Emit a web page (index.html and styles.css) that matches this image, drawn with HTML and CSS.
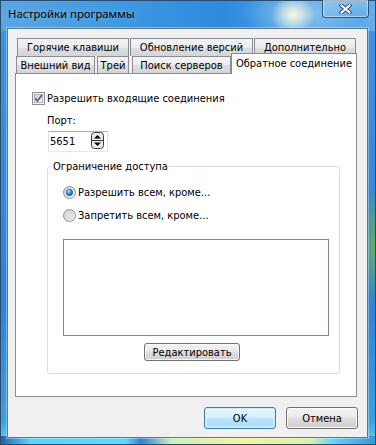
FILE: index.html
```html
<!DOCTYPE html>
<html lang="ru">
<head>
<meta charset="utf-8">
<title>Настройки программы</title>
<link rel="stylesheet" href="styles.css">
</head>
<body>
<div class="window">
  <div class="titlebar">
    <span class="title">Настройки программы</span>
    <button class="close" aria-label="Закрыть">
      <svg width="13" height="10" viewBox="0 0 13 10"><path d="M2.5 1.5 L10.5 8.5 M10.5 1.5 L2.5 8.5" stroke="#35506c" stroke-width="4" stroke-linecap="square"/><path d="M2.5 1.5 L10.5 8.5 M10.5 1.5 L2.5 8.5" stroke="#ffffff" stroke-width="2" stroke-linecap="square"/></svg>
    </button>
  </div>
  <div class="client">
    <div class="tabs">
      <div class="tab-row row-back">
        <div class="tab t-hotkeys">Горячие клавиши</div>
        <div class="tab t-updates">Обновление версий</div>
        <div class="tab t-extra">Дополнительно</div>
      </div>
      <div class="tab-row row-front">
        <div class="tab t-look">Внешний вид</div>
        <div class="tab t-tray">Трей</div>
        <div class="tab t-search">Поиск серверов</div>
        <div class="tab t-reverse active">Обратное соединение</div>
      </div>
    </div>
    <div class="panel">
      <div class="check-row">
        <svg class="checkbox" width="13" height="13" viewBox="0 0 13 13"><defs><linearGradient id="cbg" x1="0" y1="0" x2="1" y2="1"><stop offset="0" stop-color="#c9cdd3"/><stop offset="1" stop-color="#f6f6f6"/></linearGradient></defs><rect x="0.5" y="0.5" width="12" height="12" fill="#f3f3f3" stroke="#8e8f8f"/><rect x="2.5" y="2.5" width="8" height="8" fill="url(#cbg)" stroke="#b0b4ba"/><path d="M3.3 6.2 L5.4 8.9 L9.9 3" fill="none" stroke="#4b5f82" stroke-width="1.7"/></svg>
        <span>Разрешить входящие соединения</span>
      </div>
      <div class="port-label">Порт:</div>
      <div class="spin">
        <span class="spin-value">5651</span>
        <svg class="spin-buttons" width="13" height="17" viewBox="0 0 13 17"><rect x="0.5" y="0.5" width="12" height="16" rx="3" fill="#e9e9e9" stroke="#3d3d3d"/><line x1="1" y1="8.5" x2="12" y2="8.5" stroke="#3d3d3d"/><path d="M3 6.5 L6.5 3 L10 6.5 Z" fill="#000"/><path d="M3 10.5 L6.5 14 L10 10.5 Z" fill="#000"/></svg>
      </div>
      <fieldset class="group">
        <legend>Ограничение доступа</legend>
        <div class="radio-row first">
          <svg class="radio" width="13" height="13" viewBox="0 0 13 13"><defs><radialGradient id="rbg1" cx="0.7" cy="0.7" r="0.8"><stop offset="0" stop-color="#f8f8f8"/><stop offset="1" stop-color="#cfd2d6"/></radialGradient><radialGradient id="rdot" cx="0.35" cy="0.3" r="0.8"><stop offset="0" stop-color="#b9ecfe"/><stop offset="0.45" stop-color="#3e93d8"/><stop offset="1" stop-color="#154d8e"/></radialGradient></defs><circle cx="6.5" cy="6.5" r="6" fill="url(#rbg1)" stroke="#8e8f8f"/><circle cx="6.5" cy="6.5" r="3.2" fill="url(#rdot)" stroke="#1f4f86" stroke-width="0.6"/></svg>
          <span>Разрешить всем, кроме...</span>
        </div>
        <div class="radio-row second">
          <svg class="radio" width="13" height="13" viewBox="0 0 13 13"><defs><radialGradient id="rbg2" cx="0.7" cy="0.7" r="0.8"><stop offset="0" stop-color="#f8f8f8"/><stop offset="1" stop-color="#cfd2d6"/></radialGradient></defs><circle cx="6.5" cy="6.5" r="6" fill="url(#rbg2)" stroke="#8e8f8f"/><circle cx="6.5" cy="6.5" r="3.5" fill="#e2e4e7" stroke="#c5c8cc" stroke-width="0.6"/></svg>
          <span>Запретить всем, кроме...</span>
        </div>
        <div class="listbox"></div>
        <button class="btn edit">Редактировать</button>
      </fieldset>
    </div>
    <div class="footer">
      <button class="btn default">OK</button>
      <button class="btn">Отмена</button>
    </div>
  </div>
</div>
</body>
</html>
```

FILE: styles.css
```css
* { box-sizing: border-box; }
html, body { margin: 0; padding: 0; }
body {
  width: 376px;
  height: 445px;
  overflow: hidden;
  font-family: "DejaVu Sans Condensed", "Liberation Sans", sans-serif;
  font-size: 11px;
  color: #000;
}

.window {
  width: 376px;
  height: 445px;
  display: flex;
  flex-direction: column;
  padding: 0 7px 6px 6px;
  border: 1px solid #2a4c70;
  background:
    radial-gradient(ellipse 22px 20px at 292px 14px, rgba(255,252,225,0.95), rgba(255,252,225,0)),
    radial-gradient(ellipse 60px 28px at 300px 12px, rgba(205,232,250,0.5), rgba(205,232,250,0)),
    radial-gradient(ellipse 8px 60px at 372px 245px, rgba(110,180,80,0.9), rgba(110,180,80,0)),
    linear-gradient(to right, #2560b0 0, #5fd6f6 30px, #62d8f6 125px, #2a80d4 140px, #c8f0b8 170px, #f2f59a 240px, #d8f2a8 310px, #6ad8f4 330px, #3a8fdc 376px) bottom / 100% 8px no-repeat,
    linear-gradient(to right, #5aa6e4, #3f98e0 120px, #2d8ade 220px, #4aa0e4 300px, #64ade8 376px) top / 100% 30px no-repeat,
    linear-gradient(#3e95df, #2f82d4 300px, #3aa0e0 420px, #62d4f4);
}

.titlebar {
  height: 27px;
  display: flex;
  align-items: flex-start;
  justify-content: space-between;
}
.title {
  font-family: "Segoe UI", "Noto Sans", sans-serif;
  font-size: 11.3px;
  line-height: 16px;
  margin: 5px 0 0 1px;
  color: #000;
  text-shadow: 0 0 6px rgba(255,255,255,0.35);
}
.close {
  width: 47px;
  height: 18px;
  margin: -1px -1px 0 0;
  padding: 0;
  display: flex;
  align-items: center;
  justify-content: center;
  border: 1px solid rgba(25,50,85,0.75);
  border-top: 0;
  border-radius: 0 0 4px 4px;
  background: linear-gradient(rgba(255,255,255,0.28), rgba(255,255,255,0.12) 50%, rgba(255,255,255,0.05));
  box-shadow: inset 0 0 0 1px rgba(255,255,255,0.45);
}

.client {
  flex: 1;
  display: flex;
  flex-direction: column;
  background: #f0f0f0;
  border: 1px solid #5c7894;
  box-shadow: 0 0 0 1px rgba(255,255,255,0.35);
  padding: 9px 10px 8px 7px;
}

.tabs { display: flex; flex-direction: column; }
.tab-row { display: flex; }
.row-back { height: 18px; padding-left: 2px; gap: 1px; }
.row-front { height: 17px; align-items: flex-end; }

.tab {
  height: 100%;
  display: flex;
  align-items: center;
  justify-content: center;
  white-space: nowrap;
  border: 1px solid #898c95;
  border-bottom: 0;
  background: linear-gradient(#f3f3f3, #ececec 50%, #dfdfdf 50%, #d5d5d5);
}
.row-front .tab { padding-top: 1px; }
.t-hotkeys { width: 112px; }
.t-updates { width: 123px; }
.t-extra { width: 102px; }
.t-look { width: 79px; margin-left: 1px; }
.t-tray { width: 32px; margin-left: 2px; }
.t-search { width: 99px; margin-left: 3px; }
.tab.active {
  width: 126px;
  height: 21px;
  margin-bottom: -1px;
  padding: 0 0 2px;
  background: #fff;
  position: relative;
  z-index: 1;
}

.panel {
  flex: 1;
  background: #fff;
  border: 1px solid #898c95;
  padding: 18px 0 0 16px;
  display: flex;
  flex-direction: column;
  align-items: flex-start;
}

.check-row, .radio-row {
  display: flex;
  align-items: center;
  height: 13px;
  line-height: 13px;
  gap: 2px;
}
.checkbox, .radio { flex: none; }

.port-label {
  margin: 9px 0 0 15px;
  line-height: 13px;
}

.spin {
  margin: 4px 0 0 16px;
  width: 60px;
  height: 21px;
  display: flex;
  align-items: center;
  border: 1px solid #dbdfe6;
  border-top-color: #abadb3;
  border-bottom-color: #e3e9ef;
  padding: 0 3px 0 1px;
}
.spin-value { flex: 1; }
.spin-buttons { align-self: flex-start; }

.group {
  margin: 8px 0 0 15px;
  width: 293px;
  min-width: 0;
  border: 1px solid #d5dfe5;
  border-radius: 3px;
  padding: 0 10px 12px 15px;
  display: flex;
  flex-direction: column;
  align-items: flex-start;
}
.group legend {
  margin-left: -11px;
  padding: 0 1px;
  line-height: 13px;
}
.radio-row.first { margin-top: 13px; }
.radio-row.second { margin-top: 10px; }

.listbox {
  margin-top: 17px;
  width: 266px;
  height: 97px;
  border: 1px solid #828790;
  background: #fff;
}

.btn {
  font: inherit;
  color: #000;
  padding: 0;
  border: 1px solid #707070;
  border-radius: 3px;
  background: linear-gradient(#f2f2f2, #ebebeb 45%, #dddddd 50%, #cfcfcf);
  box-shadow: inset 0 0 0 1px rgba(255,255,255,0.75);
}
.btn.edit {
  margin: 7px 0 0 81px;
  width: 96px;
  height: 18px;
}

.footer {
  margin: 10px -1px 0 0;
  display: flex;
  justify-content: flex-end;
  gap: 10px;
}
.footer .btn { width: 72px; height: 22px; }
.btn.default {
  border-color: #3c7fb1;
  background: linear-gradient(#eaf6fd, #d9f0fc 45%, #bee6fd 50%, #a7d9f5);
  box-shadow: inset 0 0 0 1px #c5ecfc, inset 0 0 0 2px rgba(255,255,255,0.4);
}
```
